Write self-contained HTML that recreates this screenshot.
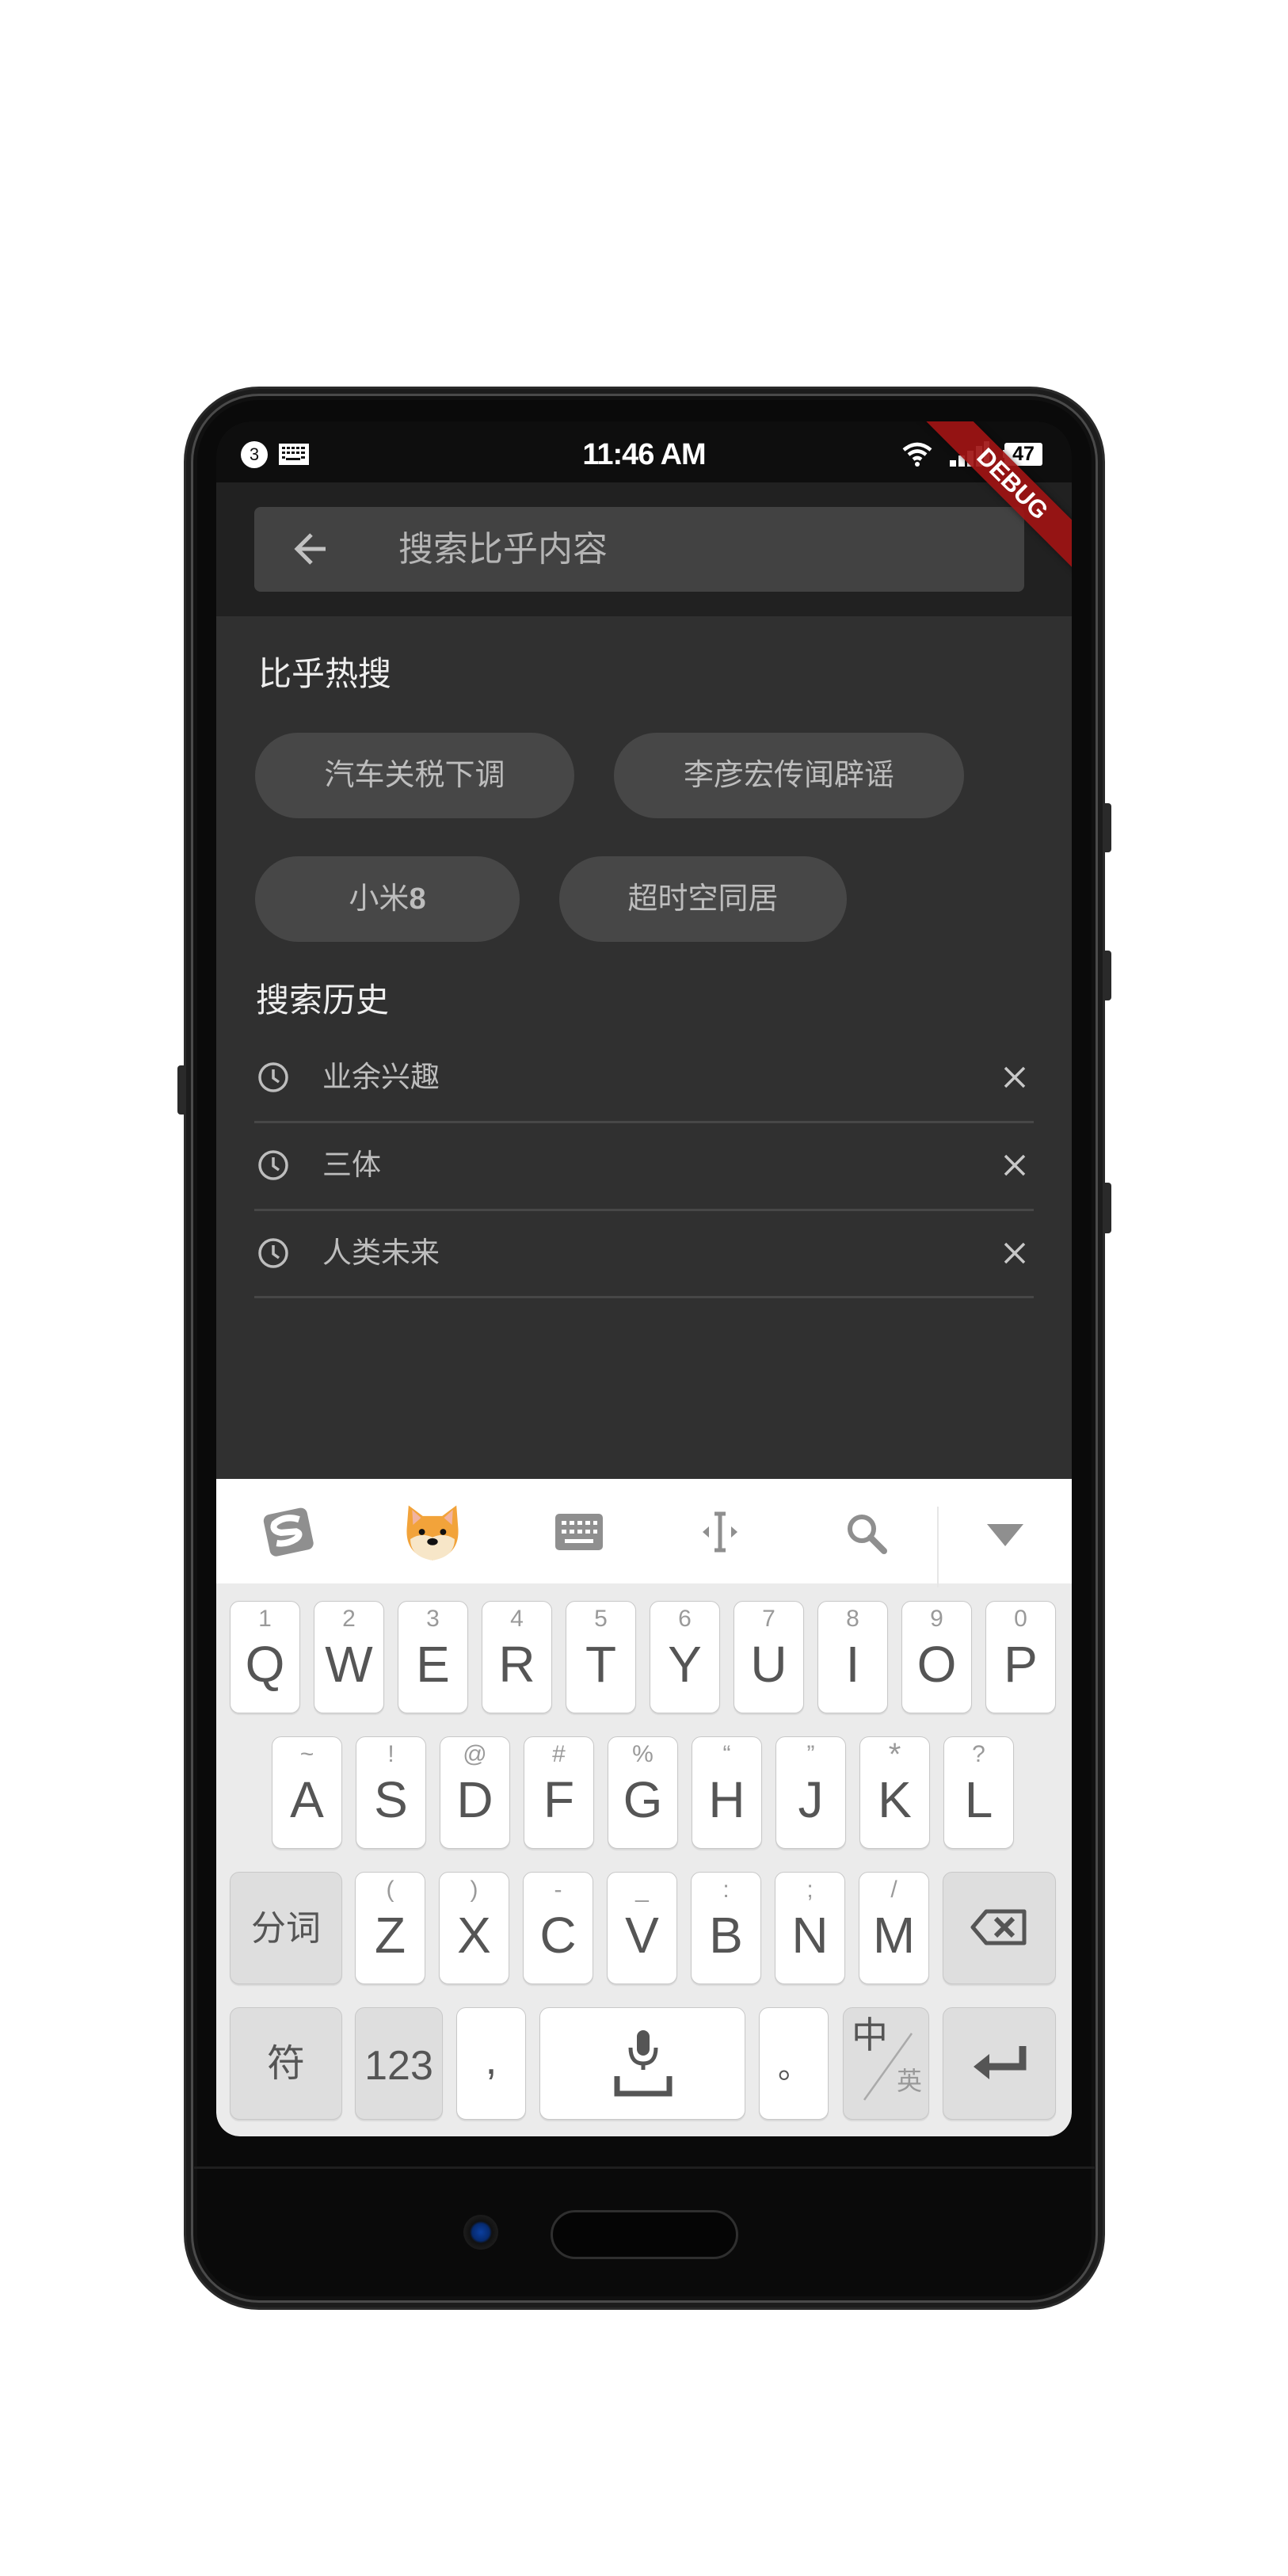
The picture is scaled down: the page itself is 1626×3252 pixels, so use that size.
<!DOCTYPE html>
<html><head><meta charset="utf-8"><style>
*{margin:0;padding:0;box-sizing:border-box}
body{width:1626px;height:3252px;background:#fff;position:relative;overflow:hidden;font-family:"Liberation Sans","Noto Sans CJK SC",sans-serif}
.a{position:absolute}
.phone{left:232px;top:488px;width:1163px;height:2428px;border-radius:95px;background:#0a0a0a;border:3px solid #2a2a2a;box-shadow:inset 0 0 0 6px #1c1c1c,inset 0 0 0 9px #4a4a4a,inset 0 0 0 14px #101010}
.screen{left:273px;top:532px;width:1080px;height:2165px;background:#000;border-radius:44px 44px 30px 30px;overflow:hidden}
.chip{position:absolute;height:108px;border-radius:54px;background:#474747;color:#bdbdbd;font-size:38px;text-align:center;line-height:108px}
.hist{position:absolute;left:48px;width:984px;height:3px;background:#474747}
.htxt{position:absolute;left:134px;font-size:37px;color:#bdbdbd;line-height:50px}
.key{position:absolute;width:89px;height:142px;background:#fff;border:1.5px solid #c8c8c8;border-radius:12px;box-shadow:0 2px 1px rgba(0,0,0,.08);text-align:center;color:#555}
.key .n{position:absolute;left:0;right:0;top:2px;font-size:30px;color:#9a9a9a;line-height:40px}
.key .l{position:absolute;left:0;right:0;top:44px;font-size:64px;line-height:70px}
.fk{background:#dedede}
</style></head><body>
<div class="a" style="left:1393px;top:1014px;width:10px;height:62px;background:#2a2a2a;border-radius:0 4px 4px 0"></div>
<div class="a" style="left:1393px;top:1200px;width:10px;height:63px;background:#2a2a2a;border-radius:0 4px 4px 0"></div>
<div class="a" style="left:1393px;top:1493px;width:10px;height:64px;background:#2a2a2a;border-radius:0 4px 4px 0"></div>
<div class="a" style="left:224px;top:1345px;width:10px;height:62px;background:#2a2a2a;border-radius:4px 0 0 4px"></div>
<div class="a phone"></div>
<div class="a screen">
  <div class="a" style="left:0;top:0;width:1080px;height:77px;background:#0e0e0e"></div>
  <div class="a" style="left:31px;top:25px;width:34px;height:34px;border-radius:50%;background:#fff;color:#111;font-size:22px;text-align:center;line-height:34px">3</div>
  <svg class="a" style="left:79px;top:28px" width="38" height="27" viewBox="0 0 38 27"><rect width="38" height="27" fill="#fff"/><g fill="#111"><rect x="4" y="4" width="4" height="3"/><rect x="10" y="4" width="4" height="3"/><rect x="16" y="4" width="4" height="3"/><rect x="22" y="4" width="4" height="3"/><rect x="28" y="4" width="5" height="3"/><rect x="4" y="10" width="4" height="3"/><rect x="10" y="10" width="4" height="3"/><rect x="16" y="10" width="4" height="3"/><rect x="22" y="10" width="4" height="3"/><rect x="28" y="10" width="5" height="3"/><rect x="4" y="16" width="4" height="3"/><rect x="28" y="16" width="5" height="3"/><rect x="9" y="18" width="18" height="3"/></g></svg>
  <div class="a" style="left:0;width:1080px;top:18px;text-align:center;color:#fff;font-size:38px;line-height:48px;font-weight:bold;letter-spacing:-1px">11:46 AM</div>
  <svg class="a" style="left:865px;top:25px" width="40" height="32" viewBox="0 0 40 32"><g fill="none" stroke="#fff" stroke-width="4.5"><path d="M3 11 Q20 -3 37 11"/><path d="M9 17 Q20 8 31 17"/><path d="M15 23 Q20 19 25 23"/></g><circle cx="20" cy="29" r="3" fill="#fff"/></svg>
  <svg class="a" style="left:926px;top:25px" width="50" height="33"><rect x="0" y="24" width="8" height="8" fill="#fff"/><rect x="11" y="18" width="8" height="14" fill="#fff"/><rect x="22" y="12" width="8" height="20" fill="#fff"/><rect x="33" y="6" width="8" height="26" fill="#fff"/><rect x="43" y="0" width="7" height="32" fill="#fff"/></svg>
  <div class="a" style="left:995px;top:27px;width:48px;height:29px;background:#fff;border-radius:3px;color:#000;font-size:25px;font-weight:bold;text-align:center;line-height:29px">47</div>
  <div class="a" style="left:993px;top:36px;width:4px;height:10px;background:#fff"></div>
  <div class="a" style="left:0;top:77px;width:1080px;height:169px;background:#212121"></div>
  <div class="a" style="left:48px;top:108px;width:972px;height:107px;background:#424242;border-radius:8px"></div>
  <svg class="a" style="left:96px;top:137px" width="48" height="48" viewBox="0 0 48 48"><path d="M42 24H8M24 6L6 24l18 18" fill="none" stroke="#c2c2c2" stroke-width="5"/></svg>
  <div class="a" style="left:230px;top:135px;font-size:44px;color:#b5b5b5;line-height:54px">搜索比乎内容</div>
  <div class="a" style="left:0;top:246px;width:1080px;height:1090px;background:#303030"></div>
  <div class="a" style="left:53px;top:293px;font-size:42px;color:#eee;line-height:52px">比乎热搜</div>
  <div class="chip" style="left:49px;top:393px;width:403px">汽车关税下调</div>
  <div class="chip" style="left:502px;top:393px;width:442px">李彦宏传闻辟谣</div>
  <div class="chip" style="left:49px;top:549px;width:334px">小米<b>8</b></div>
  <div class="chip" style="left:433px;top:549px;width:363px">超时空同居</div>
  <div class="a" style="left:50px;top:705px;font-size:42px;color:#eee;line-height:52px">搜索历史</div>
  <svg class="a" style="left:52px;top:808px" width="40" height="40" viewBox="0 0 40 40"><circle cx="20" cy="20" r="17" fill="none" stroke="#bdbdbd" stroke-width="3.5"/><path d="M20 10v11l7 5" fill="none" stroke="#bdbdbd" stroke-width="3.5"/></svg>
  <svg class="a" style="left:52px;top:919px" width="40" height="40" viewBox="0 0 40 40"><circle cx="20" cy="20" r="17" fill="none" stroke="#bdbdbd" stroke-width="3.5"/><path d="M20 10v11l7 5" fill="none" stroke="#bdbdbd" stroke-width="3.5"/></svg>
  <svg class="a" style="left:52px;top:1030px" width="40" height="40" viewBox="0 0 40 40"><circle cx="20" cy="20" r="17" fill="none" stroke="#bdbdbd" stroke-width="3.5"/><path d="M20 10v11l7 5" fill="none" stroke="#bdbdbd" stroke-width="3.5"/></svg>
  <div class="htxt" style="top:803px">业余兴趣</div>
  <div class="htxt" style="top:914px">三体</div>
  <div class="htxt" style="top:1025px">人类未来</div>
  <svg class="a" style="left:994px;top:814px" width="28" height="28"><path d="M2 2L26 26M26 2L2 26" stroke="#c8c8c8" stroke-width="3.5"/></svg>
  <svg class="a" style="left:994px;top:925px" width="28" height="28"><path d="M2 2L26 26M26 2L2 26" stroke="#c8c8c8" stroke-width="3.5"/></svg>
  <svg class="a" style="left:994px;top:1036px" width="28" height="28"><path d="M2 2L26 26M26 2L2 26" stroke="#c8c8c8" stroke-width="3.5"/></svg>
  <div class="hist" style="top:883px"></div>
  <div class="hist" style="top:994px"></div>
  <div class="hist" style="top:1104px"></div>
  <div class="a" style="left:0;top:1335px;width:1080px;height:830px;background:#ebebeb;border-radius:0 0 30px 30px"></div>
  <div class="a" style="left:0;top:1335px;width:1080px;height:132px;background:#fff"></div>
  <svg class="a" style="left:56px;top:1366px" width="70" height="70" viewBox="0 0 60 60"><g transform="rotate(-12 30 30)"><rect x="6" y="8" width="48" height="46" rx="7" fill="#8f8f8f"/><path d="M44 20 Q30 12 17 19 Q12 26 22 30 L38 32 Q44 36 36 40 Q25 44 15 40" fill="none" stroke="#fff" stroke-width="7"/></g></svg>
  <svg class="a" style="left:236px;top:1364px" width="74" height="76" viewBox="0 0 66 68"><path d="M6 4 L22 16 L44 16 L60 4 L62 30 Q64 60 33 66 Q2 60 4 30 Z" fill="#f2a33a"/><path d="M10 9 L20 18 L11 26Z M56 9 L46 18 L55 26Z" fill="#f1b3a0"/><path d="M8 42 Q20 34 33 40 Q46 34 58 42 Q58 62 33 66 Q8 62 8 42Z" fill="#f7e6c8"/><circle cx="21" cy="34" r="3.5" fill="#111"/><circle cx="45" cy="34" r="3.5" fill="#111"/><ellipse cx="33" cy="45" rx="6" ry="4" fill="#111"/></svg>
  <svg class="a" style="left:428px;top:1379px" width="60" height="46" viewBox="0 0 60 46"><rect width="60" height="46" rx="5" fill="#8f8f8f"/><g fill="#fff"><rect x="8" y="9" width="6" height="5"/><rect x="18" y="9" width="6" height="5"/><rect x="28" y="9" width="6" height="5"/><rect x="38" y="9" width="6" height="5"/><rect x="48" y="9" width="5" height="5"/><rect x="8" y="20" width="6" height="5"/><rect x="18" y="20" width="6" height="5"/><rect x="28" y="20" width="6" height="5"/><rect x="38" y="20" width="6" height="5"/><rect x="48" y="20" width="5" height="5"/><rect x="12" y="32" width="36" height="5"/></g></svg>
  <svg class="a" style="left:611px;top:1375px" width="50" height="54" viewBox="0 0 50 54"><path d="M25 4V50M18 4H32M18 50H32" stroke="#8f8f8f" stroke-width="5" fill="none"/><path d="M3 27L11 20V34Z M47 27L39 20V34Z" fill="#8f8f8f"/></svg>
  <svg class="a" style="left:793px;top:1376px" width="56" height="56" viewBox="0 0 56 56"><circle cx="22" cy="22" r="15" fill="none" stroke="#8f8f8f" stroke-width="6"/><path d="M33 33L50 50" stroke="#8f8f8f" stroke-width="8" stroke-linecap="round"/></svg>
  <div class="a" style="left:910px;top:1370px;width:2px;height:102px;background:#e6e6e6"></div>
  <svg class="a" style="left:973px;top:1392px" width="46" height="28"><path d="M0 0H46L23 28Z" fill="#8f8f8f"/></svg>
  <div class="key" style="left:17px;top:1489px"><div class="n">1</div><div class="l">Q</div></div>
  <div class="key" style="left:123px;top:1489px"><div class="n">2</div><div class="l">W</div></div>
  <div class="key" style="left:229px;top:1489px"><div class="n">3</div><div class="l">E</div></div>
  <div class="key" style="left:335px;top:1489px"><div class="n">4</div><div class="l">R</div></div>
  <div class="key" style="left:441px;top:1489px"><div class="n">5</div><div class="l">T</div></div>
  <div class="key" style="left:547px;top:1489px"><div class="n">6</div><div class="l">Y</div></div>
  <div class="key" style="left:653px;top:1489px"><div class="n">7</div><div class="l">U</div></div>
  <div class="key" style="left:759px;top:1489px"><div class="n">8</div><div class="l">I</div></div>
  <div class="key" style="left:865px;top:1489px"><div class="n">9</div><div class="l">O</div></div>
  <div class="key" style="left:971px;top:1489px"><div class="n">0</div><div class="l">P</div></div>
  <div class="key" style="left:70px;top:1660px"><div class="n">~</div><div class="l">A</div></div>
  <div class="key" style="left:176px;top:1660px"><div class="n">!</div><div class="l">S</div></div>
  <div class="key" style="left:282px;top:1660px"><div class="n">@</div><div class="l">D</div></div>
  <div class="key" style="left:388px;top:1660px"><div class="n">#</div><div class="l">F</div></div>
  <div class="key" style="left:494px;top:1660px"><div class="n">%</div><div class="l">G</div></div>
  <div class="key" style="left:600px;top:1660px"><div class="n">“</div><div class="l">H</div></div>
  <div class="key" style="left:706px;top:1660px"><div class="n">”</div><div class="l">J</div></div>
  <div class="key" style="left:812px;top:1660px"><div class="n" style="font-size:40px">*</div><div class="l">K</div></div>
  <div class="key" style="left:918px;top:1660px"><div class="n">?</div><div class="l">L</div></div>
  <div class="key fk" style="left:17px;top:1831px;width:142px"><div class="l" style="top:36px;font-size:44px">分词</div></div>
  <div class="key" style="left:175px;top:1831px"><div class="n">(</div><div class="l">Z</div></div>
  <div class="key" style="left:281px;top:1831px"><div class="n">)</div><div class="l">X</div></div>
  <div class="key" style="left:387px;top:1831px"><div class="n">-</div><div class="l">C</div></div>
  <div class="key" style="left:493px;top:1831px"><div class="n">_</div><div class="l">V</div></div>
  <div class="key" style="left:599px;top:1831px"><div class="n">:</div><div class="l">B</div></div>
  <div class="key" style="left:705px;top:1831px"><div class="n">;</div><div class="l">N</div></div>
  <div class="key" style="left:811px;top:1831px"><div class="n">/</div><div class="l">M</div></div>
  <div class="key fk" style="left:917px;top:1831px;width:143px"><svg style="position:absolute;left:34px;top:46px" width="72" height="46" viewBox="0 0 72 46"><path d="M3 23L20 3H68V43H20Z" fill="none" stroke="#555" stroke-width="5" stroke-linejoin="round"/><path d="M32 12L54 34M54 12L32 34" stroke="#555" stroke-width="6"/></svg></div>
  <div class="key fk" style="left:17px;top:2002px;width:142px"><div class="l" style="top:36px;font-size:48px">符</div></div>
  <div class="key fk" style="left:175px;top:2002px;width:111px"><div class="l" style="top:38px;font-size:52px">123</div></div>
  <div class="key" style="left:303px;top:2002px;width:88px"><div class="l" style="top:30px;font-size:54px">,</div></div>
  <div class="key" style="left:408px;top:2002px;width:260px"><svg style="position:absolute;left:93px;top:26px" width="74" height="86" viewBox="0 0 74 86"><rect x="29" y="2" width="16" height="32" rx="8" fill="#555"/><path d="M21 24Q21 44 37 44Q53 44 53 24M37 44V52" fill="none" stroke="#555" stroke-width="5"/><path d="M4 60V82H70V60" fill="none" stroke="#555" stroke-width="7"/></svg></div>
  <div class="key" style="left:685px;top:2002px;width:88px"><div class="l" style="top:40px;font-size:40px">。</div></div>
  <div class="key fk" style="left:791px;top:2002px;width:109px"><div style="position:absolute;left:10px;top:8px;font-size:46px;color:#555;line-height:52px">中</div><div style="position:absolute;right:8px;top:72px;font-size:32px;color:#999;line-height:40px">英</div><svg style="position:absolute;left:22px;top:30px" width="70" height="90"><path d="M64 2L4 86" stroke="#aaa" stroke-width="2.5"/></svg></div>
  <div class="key fk" style="left:917px;top:2002px;width:143px"><svg style="position:absolute;left:36px;top:46px" width="72" height="46" viewBox="0 0 72 46"><path d="M64 2V28H18" fill="none" stroke="#555" stroke-width="9"/><path d="M2 28L22 12V44Z" fill="#555"/></svg></div>
  <div class="a" style="left:805px;top:58px;width:400px;height:42px;background:rgba(160,20,20,.92);transform:rotate(45deg);color:#fff;font-weight:bold;font-size:31px;text-align:center;line-height:42px;box-shadow:0 0 8px rgba(0,0,0,.5)">DEBUG</div>
</div>
<div class="a" style="left:245px;top:2735px;width:1137px;height:3px;background:#1e1e1e"></div>
<div class="a" style="left:585px;top:2796px;width:44px;height:44px;border-radius:50%;background:radial-gradient(circle,#0b3fa0 0,#062a6e 35%,#111 45%,#1c1c1c 70%,#050505 100%)"></div>
<div class="a" style="left:695px;top:2790px;width:237px;height:62px;border-radius:31px;border:3px solid #2f2f2f;background:#050505"></div>
</body></html>
